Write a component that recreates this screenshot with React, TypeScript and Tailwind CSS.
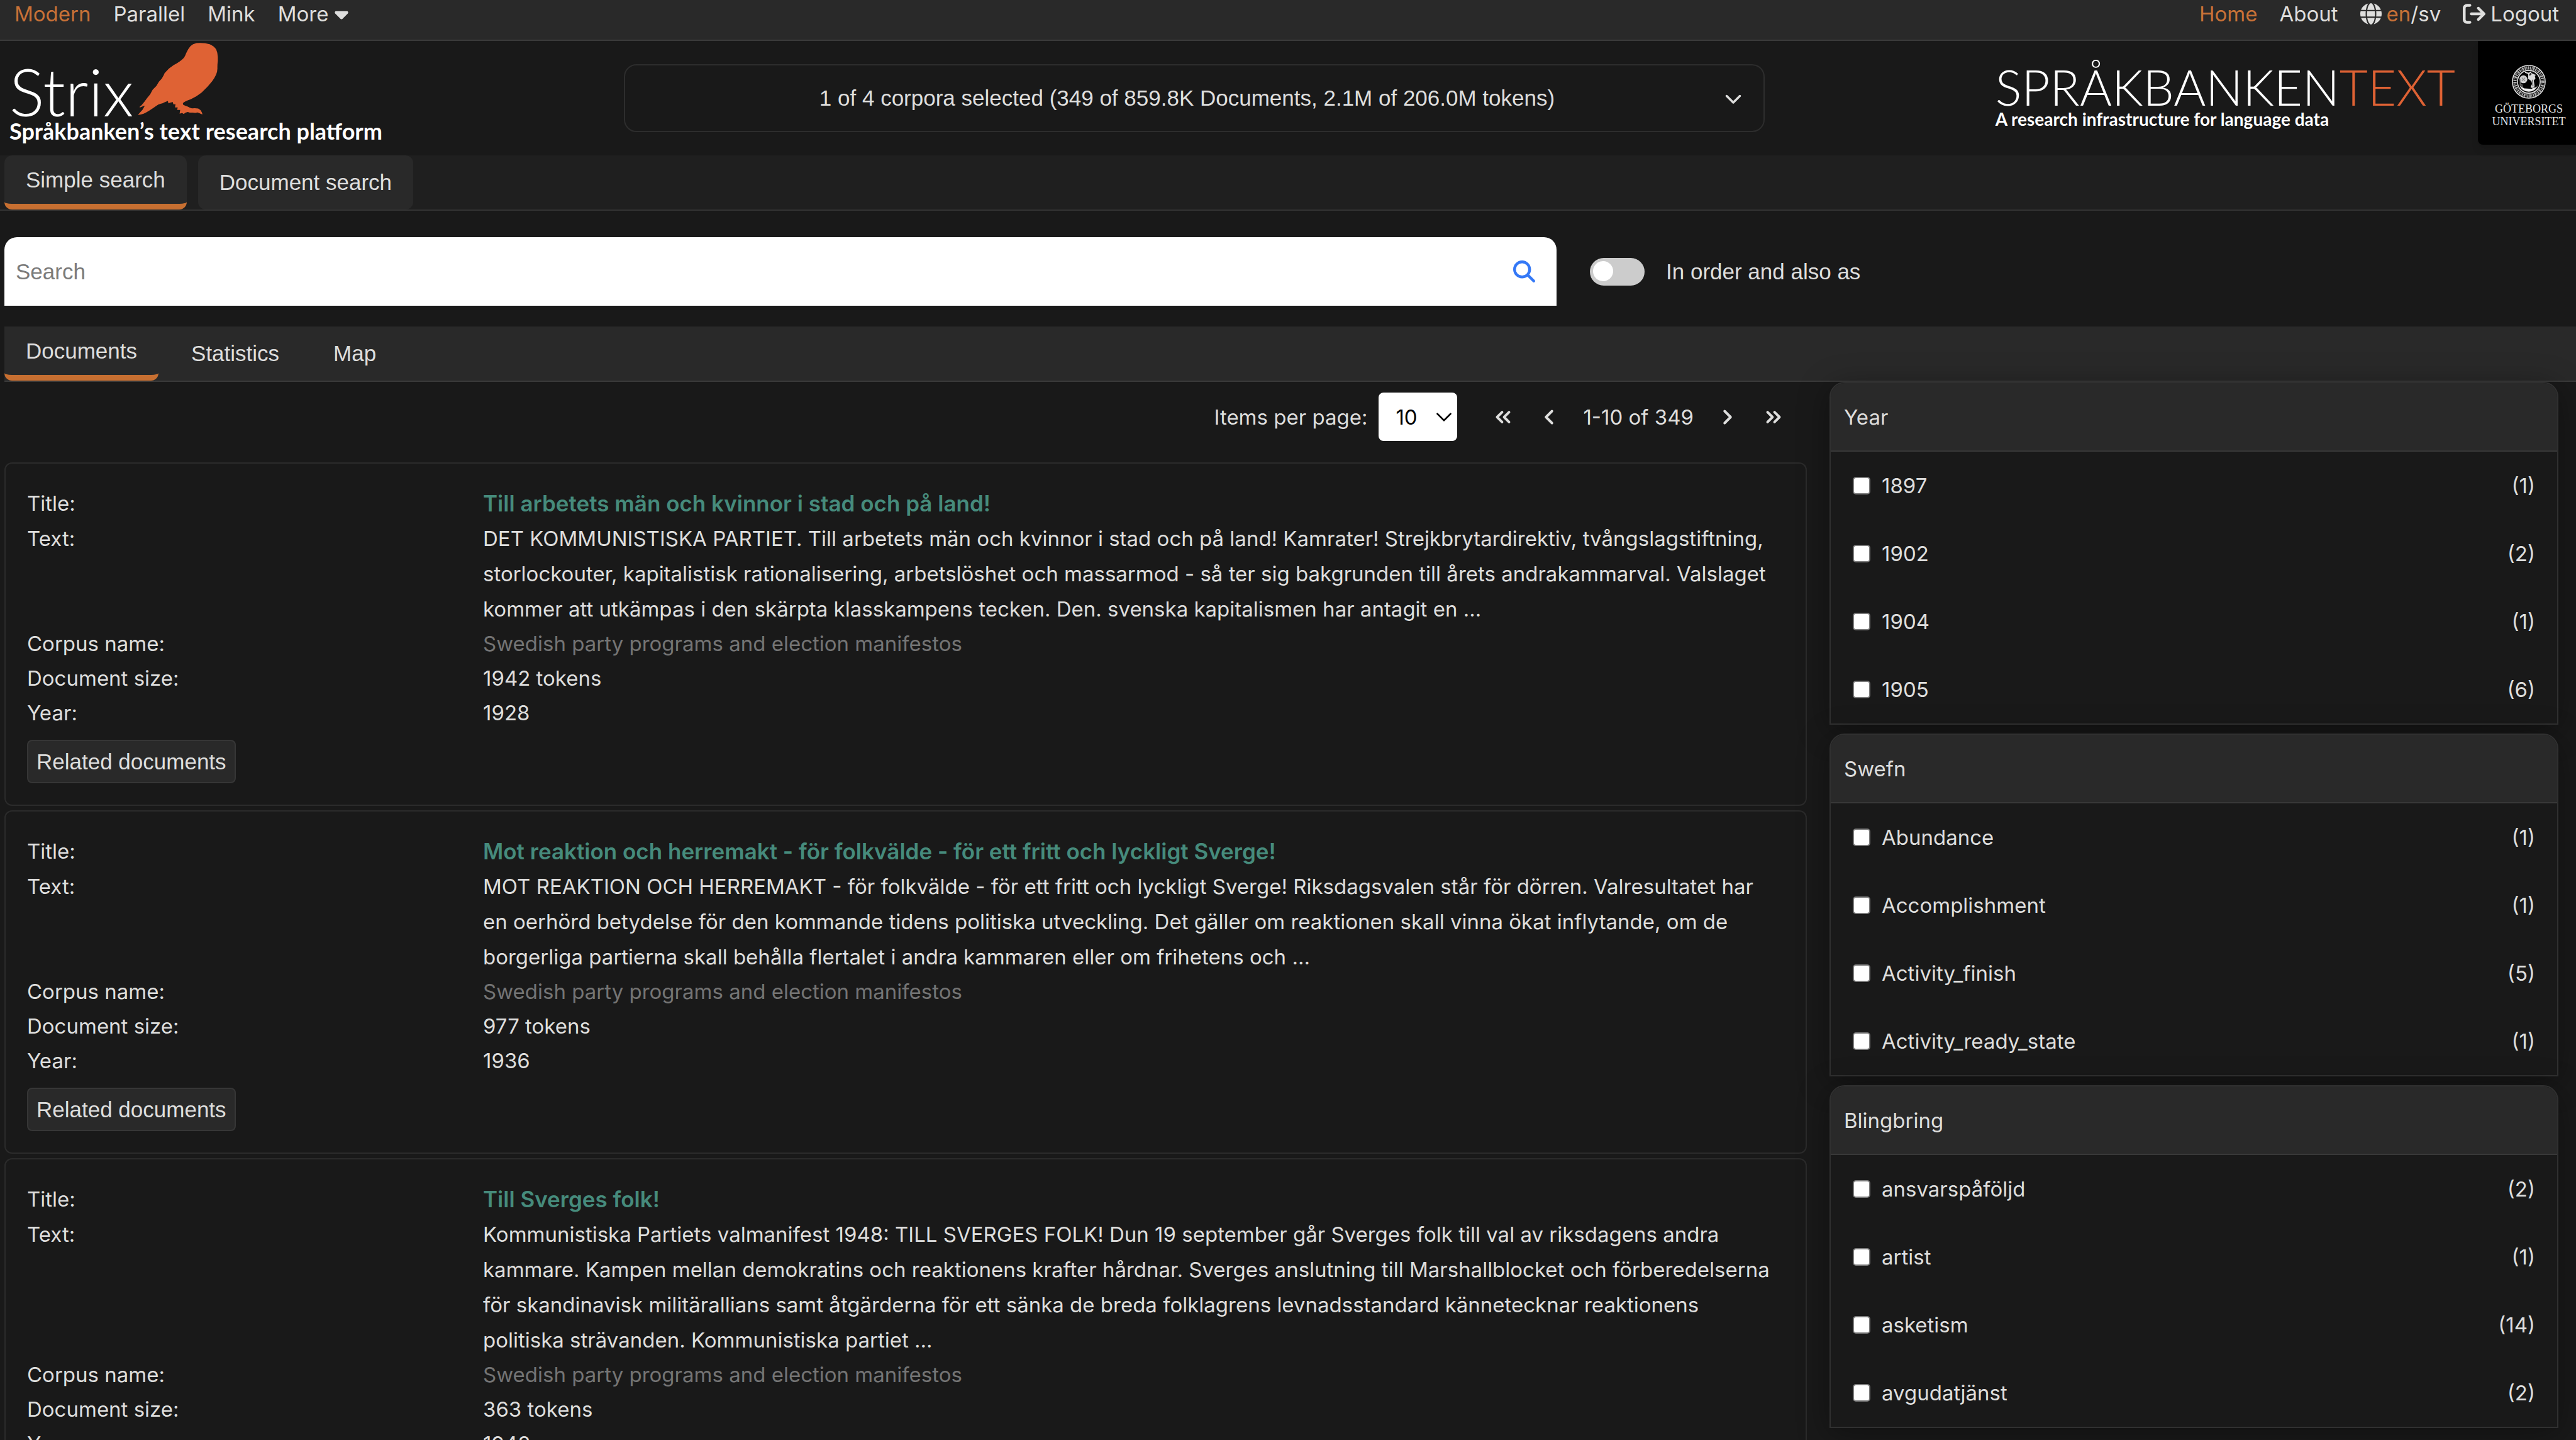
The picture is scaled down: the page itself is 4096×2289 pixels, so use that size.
import { useState } from 'react';
import { FaArrowRightFromBracket, FaCaretDown, FaChevronDown, FaGlobe, FaMagnifyingGlass } from 'react-icons/fa6';
import { ChevronDown, ChevronLeft, ChevronRight, ChevronsLeft, ChevronsRight } from 'lucide-react';

const documents = [
  {
    id: 1,
    title: 'Till arbetets män och kvinnor i stad och på land!',
    text: 'DET KOMMUNISTISKA PARTIET. Till arbetets män och kvinnor i stad och på land! Kamrater! Strejkbrytardirektiv, tvångslagstiftning, storlockouter, kapitalistisk rationalisering, arbetslöshet och massarmod - så ter sig bakgrunden till årets andrakammarval. Valslaget kommer att utkämpas i den skärpta klasskampens tecken. Den. svenska kapitalismen har antagit en ...',
    corpus: 'Swedish party programs and election manifestos',
    size: '1942 tokens',
    year: '1928',
  },
  {
    id: 2,
    title: 'Mot reaktion och herremakt - för folkvälde - för ett fritt och lyckligt Sverge!',
    text: 'MOT REAKTION OCH HERREMAKT - för folkvälde - för ett fritt och lyckligt Sverge! Riksdagsvalen står för dörren. Valresultatet har en oerhörd betydelse för den kommande tidens politiska utveckling. Det gäller om reaktionen skall vinna ökat inflytande, om de borgerliga partierna skall behålla flertalet i andra kammaren eller om frihetens och ...',
    corpus: 'Swedish party programs and election manifestos',
    size: '977 tokens',
    year: '1936',
  },
  {
    id: 3,
    title: 'Till Sverges folk!',
    text: 'Kommunistiska Partiets valmanifest 1948: TILL SVERGES FOLK! Dun 19 september går Sverges folk till val av riksdagens andra kammare. Kampen mellan demokratins och reaktionens krafter hårdnar. Sverges anslutning till Marshallblocket och förberedelserna för skandinavisk militärallians samt åtgärderna för ett sänka de breda folklagrens levnadsstandard kännetecknar reaktionens politiska strävanden. Kommunistiska partiet ...',
    corpus: 'Swedish party programs and election manifestos',
    size: '363 tokens',
    year: '1948',
  },
];

const facets = [
  {
    name: 'Year',
    items: [['1897', 1], ['1902', 2], ['1904', 1], ['1905', 6]],
  },
  {
    name: 'Swefn',
    items: [['Abundance', 1], ['Accomplishment', 1], ['Activity_finish', 5], ['Activity_ready_state', 1]],
  },
  {
    name: 'Blingbring',
    items: [['ansvarspåföljd', 2], ['artist', 1], ['asketism', 14], ['avgudatjänst', 2]],
  },
];

export default function App() {
  const [mode, setMode] = useState('Simple search');
  const [view, setView] = useState('Documents');

  return (
    <div className="h-screen overflow-hidden bg-[#191919] text-[#dededd] text-[33px] leading-[56px] font-['Inter',sans-serif]">
      <TopBar />
      <Header />

      <div className="flex h-[88px] gap-[18px] border-b-2 border-[#333333] bg-[#1f1f1f] pl-[7px]">
        {['Simple search', 'Document search'].map((name) => (
          <Tab key={name} name={name} active={mode === name} onClick={() => setMode(name)} boxed />
        ))}
      </div>

      <SearchRow />

      <div className="ml-[7px] flex h-[88px] gap-[18px] border-b-2 border-[#3a3a3a] bg-[#292929]">
        {['Documents', 'Statistics', 'Map'].map((name) => (
          <Tab key={name} name={name} active={view === name} onClick={() => setView(name)} />
        ))}
      </div>

      <main className="flex items-start gap-9 pl-[7px] pr-7">
        <section className="flex-1">
          <Pagination />
          <div className="flex flex-col gap-[7px]">
            {documents.map((doc) => (
              <DocumentCard key={doc.id} doc={doc} />
            ))}
          </div>
        </section>
        <aside className="flex w-[1159px] shrink-0 flex-col gap-[14px]">
          {facets.map((facet) => (
            <FacetPanel key={facet.name} facet={facet} />
          ))}
        </aside>
      </main>
    </div>
  );
}

function TopBar() {
  return (
    <nav className="flex h-[65px] items-start justify-between border-b-2 border-[#3a3a3a] bg-[#292929] pl-[23px] pr-[27px] leading-[44px]">
      <div className="flex gap-9">
        <a href="#modern" className="text-[#c87137]">Modern</a>
        <a href="#parallel">Parallel</a>
        <a href="#mink">Mink</a>
        <button className="flex items-center gap-1">
          More <FaCaretDown size={34} />
        </button>
      </div>
      <div className="flex gap-[35px]">
        <a href="#home" className="text-[#c87137]">Home</a>
        <a href="#about">About</a>
        <button className="flex items-center gap-2">
          <FaGlobe size={34} />
          <span><span className="text-[#c87137]">en</span>/sv</span>
        </button>
        <a href="#logout" className="flex items-center gap-2">
          <FaArrowRightFromBracket size={36} /> Logout
        </a>
      </div>
    </nav>
  );
}

function Header() {
  return (
    <header className="flex h-[182px] items-start">
      <div className="w-[992px] shrink-0 pl-[15px] pt-[3px] font-['Lato',sans-serif] text-white">
        <div className="flex items-start gap-1.5">
          <span className="mt-[29px] text-[104px] leading-[96px] font-light">Strix</span>
          <Owl />
        </div>
        <p className="text-[36px] leading-[30px] font-bold">Språkbanken’s text research platform</p>
      </div>

      <button className="mt-[37px] flex h-[108px] flex-1 items-center rounded-[20px] border-2 border-[#2d2d2d] pl-[39px] pr-[34px] font-['Liberation_Sans',Arial,sans-serif] text-[35px]">
        <span className="flex-1">1 of 4 corpora selected (349 of 859.8K Documents, 2.1M of 206.0M tokens)</span>
        <FaChevronDown size={28} />
      </button>

      <div className="flex w-[1290px] shrink-0 justify-end gap-[36px]">
        <div className="pt-[35px] font-['Lato',sans-serif] text-white">
          <p className="text-[78px] leading-[76px] font-light">
            SPRÅKBANKEN<span className="text-[#df6234]">TEXT</span>
          </p>
          <p className="text-[28px] leading-[26px] font-bold">A research infrastructure for language data</p>
        </div>
        <div className="flex h-[165px] w-[156px] flex-col items-center rounded-bl-lg bg-black pl-[6px] pt-[38px] font-['Liberation_Serif',serif] text-[18px] leading-[20px] text-[#e4e4e4] shadow-lg">
          <Seal />
          <span className="mt-[6px]">GÖTEBORGS</span>
          <span>UNIVERSITET</span>
        </div>
      </div>
    </header>
  );
}

function Tab({ name, active, onClick, boxed = false }) {
  return (
    <button
      onClick={onClick}
      className={`rounded-xl px-[34px] font-['Liberation_Sans',Arial,sans-serif] text-[35px] ${
        active ? 'border-b-9 border-[#c76f31]' : ''
      } ${boxed ? 'bg-[#292929]' : ''}`}
    >
      {name}
    </button>
  );
}

function SearchRow() {
  return (
    <div className="flex items-center pb-[33px] pl-[7px] pt-[42px] font-['Liberation_Sans',Arial,sans-serif] text-[35px]">
      <form className="flex h-[109px] w-[2468px] items-center rounded-t-[20px] bg-white pl-[18px] pr-[34px]">
        <input
          type="text"
          aria-label="Search"
          placeholder="Search"
          className="h-full flex-1 text-black outline-none placeholder:text-[#7b7b7b]"
        />
        <button type="button" aria-label="Run search" className="text-[#3478f6]">
          <FaMagnifyingGlass size={35} />
        </button>
      </form>
      <label className="ml-[53px] flex items-center gap-[34px]">
        <input
          type="checkbox"
          role="switch"
          className="h-11 w-[87px] appearance-none rounded-full bg-[#cccccc] p-[5px] before:block before:size-8 before:rounded-full before:bg-white checked:before:ml-auto"
        />
        In order and also as
      </label>
    </div>
  );
}

function Pagination() {
  return (
    <div className="flex items-center justify-end gap-[35px] pb-[34px] pr-[34px] pt-[17px]">
      <div className="mr-[19px] flex items-center gap-[18px]">
        <label htmlFor="page-size">Items per page:</label>
        <div className="relative">
          <select
            id="page-size"
            defaultValue="10"
            className="h-[77px] w-[125px] appearance-none rounded-lg bg-white pl-[27px] text-black"
          >
            <option>10</option>
            <option>25</option>
            <option>50</option>
          </select>
          <ChevronDown size={42} strokeWidth={1.5} className="pointer-events-none absolute right-0 top-[18px] text-black" />
        </div>
      </div>
      <button aria-label="First page"><ChevronsLeft size={38} strokeWidth={2.5} /></button>
      <button aria-label="Previous page"><ChevronLeft size={38} strokeWidth={2.5} /></button>
      <span>1-10 of 349</span>
      <button aria-label="Next page"><ChevronRight size={38} strokeWidth={2.5} /></button>
      <button aria-label="Last page"><ChevronsRight size={38} strokeWidth={2.5} /></button>
    </div>
  );
}

function DocumentCard({ doc }) {
  return (
    <article className="rounded-xl border-2 border-[#2b2b2b] px-[34px] pb-[34px] pt-[35px]">
      <dl className="grid grid-cols-[725px_1fr] pr-4">
        <dt>Title:</dt>
        <dd className="font-semibold text-[35px] text-[#468b7c]">
          <a href={`#doc-${doc.id}`}>{doc.title}</a>
        </dd>
        <dt>Text:</dt>
        <dd>{doc.text}</dd>
        <dt className="leading-[55px]">Corpus name:</dt>
        <dd className="leading-[55px] text-[#747474]">{doc.corpus}</dd>
        <dt className="leading-[55px]">Document size:</dt>
        <dd className="leading-[55px]">{doc.size}</dd>
        <dt className="leading-[55px]">Year:</dt>
        <dd className="leading-[55px]">{doc.year}</dd>
      </dl>
      <button className="mt-[15px] h-[69px] rounded-lg border-2 border-[#363636] bg-[#292929] px-[13px] font-['Liberation_Sans',Arial,sans-serif] text-[35px]">
        Related documents
      </button>
    </article>
  );
}

function FacetPanel({ facet }) {
  return (
    <section className="rounded-t-[24px] border-2 border-[#303030] shadow-[0_8px_50px_rgba(0,0,0,0.35)]">
      <h2 className="flex h-[109px] items-center rounded-t-[22px] border-b-2 border-[#383838] bg-[#292929] px-[21px]">
        {facet.name}
      </h2>
      <ul>
        {facet.items.map(([label, count]) => (
          <li key={label} className="flex h-[108px] items-center justify-between px-[35px]">
            <label className="flex items-center gap-[18px]">
              <input type="checkbox" className="size-7 appearance-none rounded-[5px] border-2 border-[#7b7b7b] bg-white" />
              {label}
            </label>
            <span>({count})</span>
          </li>
        ))}
      </ul>
    </section>
  );
}

function Owl() {
  return (
    <svg viewBox="46 26 588 530" className="h-[115px] w-[128px]" fill="#df6234" aria-hidden="true">
      <path d="M48 553 L58 541 L80 517 L97 487 L85 490 L60 501 L60 494 L72 484 L92 460 L116 428 L136 404 L154 370 L182 342 L200 312 L222 288 L236 262 L242 248 Q272 212 308 190 Q356 166 384 136 Q394 120 400 102 Q412 72 432 50 Q448 34 476 28 Q530 24 572 36 Q604 50 620 74 Q630 96 632 130 L632 160 Q628 188 629 214 Q628 242 620 258 Q608 286 590 308 Q556 352 514 390 Q474 422 434 440 Q392 454 376 468 L378 480 Q396 490 412 494 Q428 504 442 507 Q468 504 488 508 Q506 516 514 534 L520 550 L510 548 L498 542 L484 536 L466 540 L448 537 L426 538 L412 533 L396 538 L382 548 L370 540 L352 546 L356 518 L334 518 L338 500 L318 500 L322 476 L306 476 L302 460 L286 464 L270 470 L266 452 Q244 460 226 470 Q198 474 178 490 Q128 526 88 546 Q68 553 48 555 Z" />
    </svg>
  );
}

function Seal() {
  return (
    <svg viewBox="0 0 82 82" className="size-[54px] shrink-0" fill="none" stroke="#dcdcdc" aria-hidden="true">
      <circle cx="41" cy="41" r="39.5" strokeWidth="2.5" />
      <circle cx="41" cy="41" r="33.5" strokeWidth="8" strokeDasharray="3 1.6 1.5 1.4 4 1.8" stroke="#a8a8a8" />
      <circle cx="41" cy="41" r="27.5" strokeWidth="2.5" />
      <path d="M19 50 Q24 64 41 65 Q58 64 64 47 Q60 56 52 55 L48 58 L30 57 Z" fill="#ececec" stroke="none" />
      <circle cx="28" cy="35" r="9.5" fill="#d0d0d0" stroke="none" />
      <path d="M20 34 L20 50 M24 46 L25 55 M24 31 L32 39 M32 31 L24 39" strokeWidth="2" stroke="#8a8a8a" />
      <path d="M32 18 L41 21 L47 17 M41 19 L41 34 M45 25 L57 25 M46 21 L54 24" strokeWidth="3" />
      <path d="M43 26 L55 25 L57 33 L53 38 L55 52 L49 56 L45 54 L49 46 L47 39 L40 34 Z" fill="#dcdcdc" stroke="none" />
      <path d="M50 36 L51 52" stroke="#444444" strokeWidth="2" />
    </svg>
  );
}
